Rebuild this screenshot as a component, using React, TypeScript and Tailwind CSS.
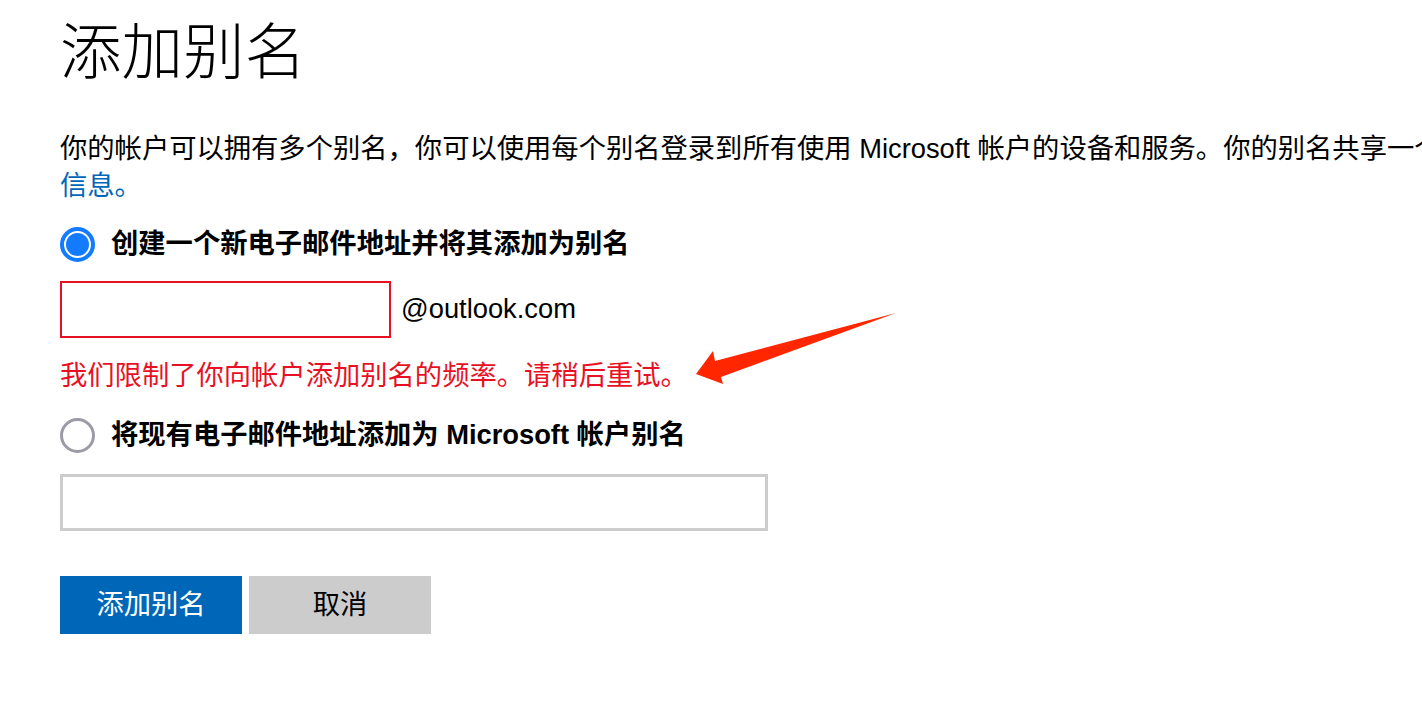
import React from "react"

const font = "font-['Liberation_Sans','Noto_Sans_CJK_SC',sans-serif]"

function RedArrow() {
  // annotation drawn over the page
  return (
    <svg
      className="absolute left-[690px] top-[300px]"
      width="220"
      height="95"
      viewBox="0 0 220 95"
    >
      <polygon
        points="206,13 25,61 23,51 6,74 33,84 31,77"
        fill="#ff2600"
      />
    </svg>
  )
}

export default function App() {
  return (
    <div className={`relative h-[708px] w-full overflow-hidden bg-white text-black ${font}`}>
      <div className="px-[60px] pt-[17px]">
        {/* Title */}
        <h1 className="text-[61.5px] font-light leading-[72px]">添加别名</h1>

        {/* Description */}
        <div className="mt-[41px] text-[27.3px] leading-[37px]">
          <div className="whitespace-nowrap">
            你的帐户可以拥有多个别名，你可以使用每个别名登录到所有使用 Microsoft
            帐户的设备和服务。你的别名共享一个收件箱、联系人列表和帐户设置。
            <a className="text-[#0067b8]">了解更多</a>
          </div>
          <a className="text-[#0067b8]">信息。</a>
        </div>

        {/* Option 1 */}
        <label className="mt-[22px] flex h-[36px] items-center gap-[16px]">
          <span className="flex h-[35px] w-[35px] items-center justify-center rounded-full border-4 border-[#127bff]">
            <span className="h-[23px] w-[23px] rounded-full bg-[#127bff]" />
          </span>
          <span className="text-[27.3px] font-bold">创建一个新电子邮件地址并将其添加为别名</span>
        </label>

        <div className="mt-[19px] flex items-center gap-[10px]">
          <div className="h-[57px] w-[331px] border-[2.5px] border-[#e81123]" />
          <span className="text-[27.3px]">@outlook.com</span>
        </div>

        <p className="mt-[19px] text-[27.3px] leading-[37px] text-[#e81123]">
          我们限制了你向帐户添加别名的频率。请稍后重试。
        </p>

        {/* Option 2 */}
        <label className="mt-[23px] flex h-[36px] items-center gap-[16px]">
          <span className="h-[35px] w-[35px] rounded-full border-[3px] border-[#9d9aa5]" />
          <span className="text-[27.3px] font-bold">将现有电子邮件地址添加为 Microsoft 帐户别名</span>
        </label>

        <div className="mt-[21px] h-[57px] w-[708px] border-[3px] border-[#cccccc]" />

        {/* Actions */}
        <div className="mt-[45px] flex gap-[7px]">
          <button className="h-[58px] w-[182px] bg-[#0067b8] text-[27.3px] text-white">添加别名</button>
          <button className="h-[58px] w-[182px] bg-[#cccccc] text-[27.3px] text-black">取消</button>
        </div>
      </div>

      <RedArrow />
    </div>
  )
}
